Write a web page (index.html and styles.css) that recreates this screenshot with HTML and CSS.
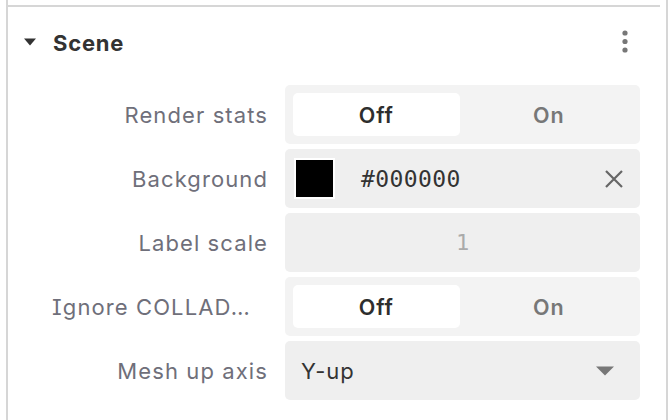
FILE: index.html
```html
<!DOCTYPE html>
<html>
<head>
<meta charset="utf-8">
<link rel="stylesheet" href="styles.css">
</head>
<body>
<div class="panel">
  <div class="separator"></div>
  <div class="header">
    <svg class="caret" width="12" height="8" viewBox="0 0 12 8"><path d="M0 0.5 L12 0.5 L6 7.5 Z" fill="#333"/></svg>
    <span class="title">Scene</span>
    <svg class="kebab" width="6" height="24" viewBox="0 0 6 24"><circle cx="3" cy="3" r="2.6" fill="#777"/><circle cx="3" cy="11.5" r="2.6" fill="#777"/><circle cx="3" cy="20" r="2.6" fill="#777"/></svg>
  </div>
  <div class="rows">
    <div class="label">Render stats</div>
    <div class="toggle">
      <div class="seg active">Off</div>
      <div class="seg">On</div>
    </div>

    <div class="label">Background</div>
    <div class="field color-field">
      <span class="swatch"></span>
      <span class="hex">#000000</span>
      <svg class="clear" width="20" height="20" viewBox="0 0 20 20"><path d="M2 2 L18 18 M18 2 L2 18" stroke="#666" stroke-width="2.2" fill="none"/></svg>
    </div>

    <div class="label">Label scale</div>
    <div class="field number-field"><span class="num">1</span></div>

    <div class="label label-long">Ignore COLLADA UP axis</div>
    <div class="toggle">
      <div class="seg active">Off</div>
      <div class="seg">On</div>
    </div>

    <div class="label">Mesh up axis</div>
    <div class="field select-field">
      <span class="sel-value">Y-up</span>
      <svg class="sel-caret" width="18" height="10" viewBox="0 0 18 10"><path d="M0 0.5 L18 0.5 L9 9.5 Z" fill="#777"/></svg>
    </div>
  </div>
</div>
</body>
</html>
```
FILE: styles.css
```css
* { box-sizing: border-box; }
html, body { margin: 0; padding: 0; background: #fff; }
body {
  font-family: Inter, "Noto Sans", sans-serif;
  font-feature-settings: "cv08";
  width: 668px;
  height: 420px;
  overflow: hidden;
}
.panel {
  margin-left: 6px;
  width: 662px;
  height: 420px;
  border-left: 2px solid #d6d6d6;
  border-right: 2px solid #d6d6d6;
  display: flex;
  flex-direction: column;
}
.separator {
  margin-top: 5px;
  margin-right: 6px;
  height: 2px;
  background: #d6d6d6;
}
.header {
  height: 72px;
  display: flex;
  align-items: center;
  padding-left: 16px;
  padding-right: 38px;
}
.caret { display: block; margin-right: 17px; margin-top: -2px; }
.title {
  font-size: 22px;
  font-weight: 700;
  letter-spacing: 0.8px;
  color: #333;
  flex: 1;
}
.kebab { display: block; margin-top: -3px; }
.rows {
  margin-top: 6px;
  padding-left: 44px;
  padding-right: 26px;
  display: grid;
  grid-template-columns: 216px 355px;
  column-gap: 17px;
  row-gap: 5px;
  grid-auto-rows: 59px;
}
.label {
  font-size: 22px;
  letter-spacing: 1.1px;
  color: #6f6f7a;
  text-align: right;
  white-space: nowrap;
  overflow: hidden;
  text-overflow: ellipsis;
  align-self: center;
}
.label-long { padding-right: 14px; }
.toggle {
  background: #f3f3f3;
  border-radius: 5px;
  padding: 8px;
  display: grid;
  grid-template-columns: 1fr 1fr;
  column-gap: 6px;
}
.seg {
  display: flex;
  align-items: center;
  justify-content: center;
  font-size: 21.5px;
  font-weight: 600;
  letter-spacing: 0.8px;
  color: #777;
  border-radius: 5px;
}
.seg.active {
  background: #fff;
  color: #2e2e2e;
}
.field {
  background: #efefef;
  border-radius: 5px;
  display: flex;
  align-items: center;
}
.color-field { padding-left: 9px; padding-right: 16px; }
.swatch {
  width: 41px;
  height: 41px;
  background: #000;
  border: 2px solid #fff;
  flex: none;
}
.hex {
  margin-left: 26px;
  font-family: "DejaVu Sans Mono", monospace;
  font-size: 23px;
  letter-spacing: 0.4px;
  color: #333;
  flex: 1;
}
.clear { display: block; }
.number-field { justify-content: center; }
.num {
  font-family: "DejaVu Sans Mono", monospace;
  font-size: 22px;
  color: #aaa;
}
.select-field { padding-left: 16px; padding-right: 26px; }
.sel-value { flex: 1; font-size: 22px; letter-spacing: 1px; color: #333; }
.sel-caret { display: block; }
```
